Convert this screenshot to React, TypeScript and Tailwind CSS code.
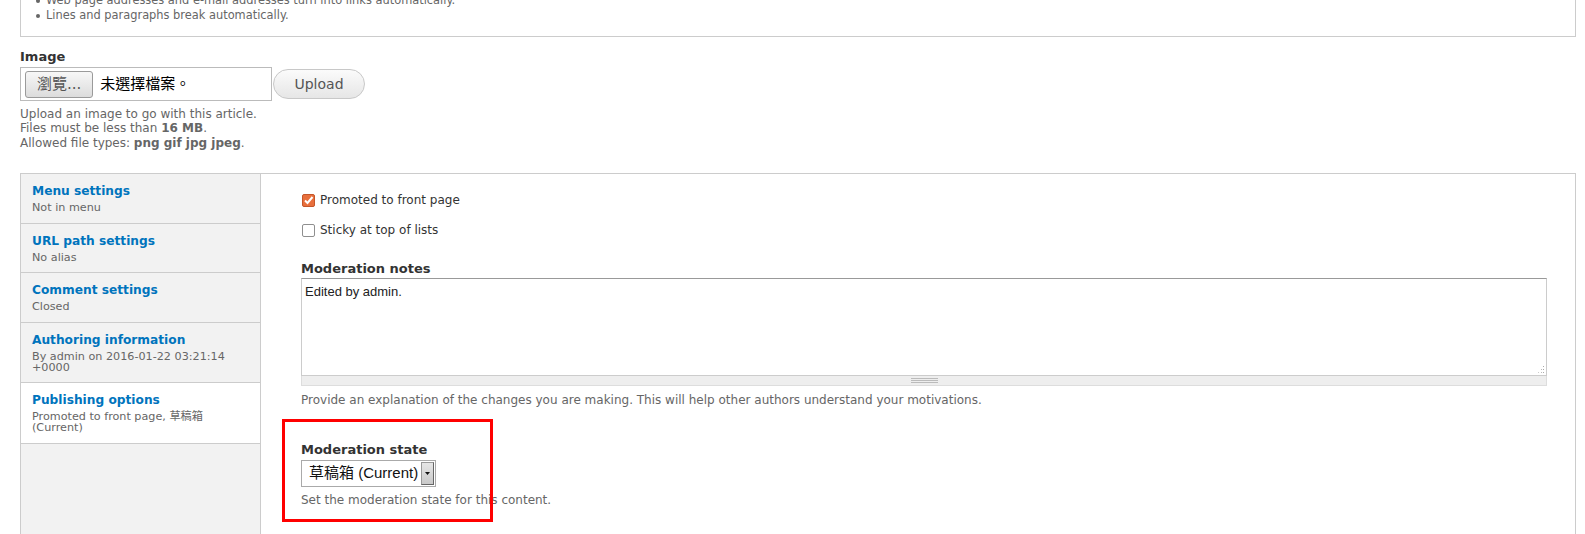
const SANS = "font-['DejaVu_Sans','Noto_Sans_CJK_TC',sans-serif]"

const TABS = [
  { title: 'Menu settings', summary: 'Not in menu' },
  { title: 'URL path settings', summary: 'No alias' },
  { title: 'Comment settings', summary: 'Closed' },
  { title: 'Authoring information', summary: 'By admin on 2016-01-22 03:21:14 +0000' },
  { title: 'Publishing options', summary: 'Promoted to front page, 草稿箱 (Current)', active: true },
]

function Checkbox({ checked, label }: { checked?: boolean; label: string }) {
  return (
    <div className="flex items-center h-4 text-[12px] leading-4 text-[#333]">
      {checked ? (
        <span className="w-[13px] h-[13px] rounded-[2px] bg-[#e86f3c] border border-[#c4562a] flex items-center justify-center mr-[5px] ml-px">
          <svg width="11" height="11" viewBox="0 0 11 11">
            <path d="M2 5.5 L4.5 8 L9.5 2" stroke="#fff" strokeWidth="2" fill="none" />
          </svg>
        </span>
      ) : (
        <span className="w-[13px] h-[13px] rounded-[2px] bg-white border border-[#8f8f8f] mr-[5px] ml-px" />
      )}
      <span>{label}</span>
    </div>
  )
}

export default function App() {
  return (
    <div className={`${SANS} bg-white w-[1585px] h-[534px] overflow-hidden pl-[20px] pr-[9px]`}>
      {/* Filter tips box (cut at top) */}
      <div className="-mt-[20px] border border-[#ccc] pt-[12px] pb-[13px] pl-[15px]">
        <ul className="text-[11.4px] leading-[15px] text-[#666]">
          <li className="flex items-center gap-[6px]">
            <span className="w-[4px] h-[4px] rounded-full bg-[#666]" />
            Web page addresses and e-mail addresses turn into links automatically.
          </li>
          <li className="flex items-center gap-[6px]">
            <span className="w-[4px] h-[4px] rounded-full bg-[#666]" />
            Lines and paragraphs break automatically.
          </li>
        </ul>
      </div>

      {/* Image field */}
      <div className="mt-[12px]">
        <div className="text-[13px] leading-4 font-bold text-[#333] mb-[2px]">Image</div>
        <div className="flex items-center">
          <div className="w-[252px] h-[34px] border border-[#bbb] bg-white flex items-center pl-[4px]">
            <div className="h-[27px] px-[11px] flex items-center rounded-[3px] border border-[#9a9a9a] bg-gradient-to-b from-[#f7f7f7] to-[#dcdcdc] text-[15px] text-[#555]">
              瀏覽...
            </div>
            <span className="ml-[7px] text-[15px] text-black">未選擇檔案。</span>
          </div>
          <button className="ml-px h-[30px] w-[92px] rounded-full border border-[#c8c8c8] bg-gradient-to-b from-[#fbfbfb] to-[#e6e6e6] text-[14px] text-[#555] flex items-center justify-center">
            Upload
          </button>
        </div>
        <div className="mt-[6px] text-[12px] leading-[14.4px] text-[#666]">
          <div>Upload an image to go with this article.</div>
          <div>
            Files must be less than <strong className="font-bold">16 MB</strong>.
          </div>
          <div>
            Allowed file types: <strong className="font-bold">png gif jpg jpeg</strong>.
          </div>
        </div>
      </div>

      {/* Vertical tabs */}
      <div className="mt-[23px] flex border border-[#ccc] h-[400px]">
        <ul className="w-[240px] shrink-0 bg-[#f2f2f2] border-r border-[#ccc]">
          {TABS.map((t) => (
            <li
              key={t.title}
              className={`border-b border-[#ccc] pt-[9px] pb-[9.5px] pl-[11px] pr-[20px] ${t.active ? 'bg-white' : ''}`}
            >
              <div className="text-[12.2px] leading-4 font-bold text-[#0074bd]">{t.title}</div>
              <div className="mt-[3px] text-[11.2px] leading-[11px] text-[#666]">{t.summary}</div>
            </li>
          ))}
        </ul>

        <div className="flex-1 pl-[40px] pr-[28px] pt-[18px]">
          <Checkbox checked label="Promoted to front page" />
          <div className="mt-[14px]">
            <Checkbox label="Sticky at top of lists" />
          </div>

          <div className="mt-[23px] text-[13px] leading-4 font-bold text-[#333]">Moderation notes</div>
          <div className="mt-[1px]">
            <div className="relative h-[98px] border border-[#ccc] border-t-[#999] bg-white px-[3px] pt-[5px] font-['Liberation_Sans',sans-serif] text-[13px] leading-4 text-[#222]">
              Edited by admin.
              <svg className="absolute right-[1px] bottom-[1px]" width="8" height="8" viewBox="0 0 8 8">
                <rect x="6" y="0" width="1" height="1" fill="#aaa" />
                <rect x="6" y="3" width="1" height="1" fill="#aaa" />
                <rect x="4" y="3" width="1" height="1" fill="#bbb" />
                <rect x="6" y="6" width="1" height="1" fill="#aaa" />
                <rect x="4" y="6" width="1" height="1" fill="#bbb" />
                <rect x="1" y="6" width="1" height="1" fill="#ccc" />
              </svg>
            </div>
            <div className="h-[10px] bg-[#eee] border border-t-0 border-[#ddd] flex items-center justify-center">
              <div className="w-[27px] flex flex-col gap-[1px]">
                <span className="h-px bg-[#bbb]" />
                <span className="h-px bg-[#bbb]" />
                <span className="h-px bg-[#bbb]" />
              </div>
            </div>
          </div>
          <div className="mt-[7px] text-[12px] leading-[15px] text-[#666]">
            Provide an explanation of the changes you are making. This will help other authors understand your motivations.
          </div>

          <div className="relative mt-[34px]">
            <div className="text-[13px] leading-4 font-bold text-[#333]">Moderation state</div>
            <div className="mt-[2px] w-[135px] h-[27px] border border-[#aaa] bg-white flex items-stretch">
              <span className="flex-1 flex items-center pl-[7px] whitespace-nowrap font-['Liberation_Sans','Noto_Sans_CJK_TC',sans-serif] text-[15px] text-[#111]">
                草稿箱 (Current)
              </span>
              <span className="w-[13px] my-px mr-px bg-gradient-to-b from-[#e6e6e6] to-[#c9c9c9] border border-[#999] border-r-[#666] border-b-[#666] flex items-center justify-center">
                <svg width="5" height="3" viewBox="0 0 5 3">
                  <path d="M0 0 H5 L2.5 3 Z" fill="#111" />
                </svg>
              </span>
            </div>
            <div className="mt-[6px] text-[12px] leading-[15px] text-[#666]">Set the moderation state for this content.</div>
            {/* red annotation frame */}
            <div className="absolute -left-[19px] -top-[23px] w-[211px] h-[103px] border-[3px] border-[#ff0000]" />
          </div>
        </div>
      </div>
    </div>
  )
}
